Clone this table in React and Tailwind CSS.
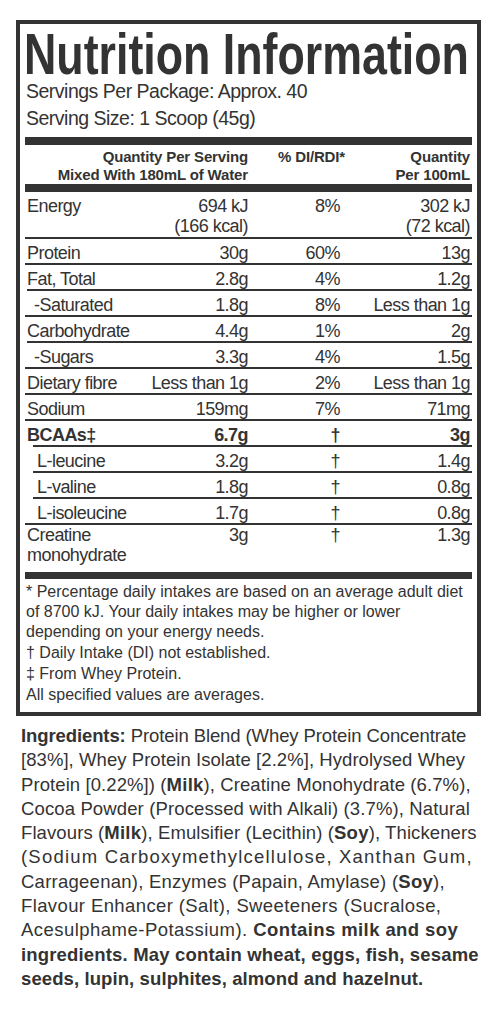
import React from 'react';

const rows = [
  { label: ['Energy'], qty: ['694 kJ', '(166 kcal)'], pct: '8%', per: ['302 kJ', '(72 kcal)'], first: true },
  { label: ['Protein'], qty: ['30g'], pct: '60%', per: ['13g'] },
  { label: ['Fat, Total'], qty: ['2.8g'], pct: '4%', per: ['1.2g'] },
  { label: ['-Saturated'], qty: ['1.8g'], pct: '8%', per: ['Less than 1g'], indent: 'sub' },
  { label: ['Carbohydrate'], qty: ['4.4g'], pct: '1%', per: ['2g'] },
  { label: ['-Sugars'], qty: ['3.3g'], pct: '4%', per: ['1.5g'], indent: 'sub' },
  { label: ['Dietary fibre'], qty: ['Less than 1g'], pct: '2%', per: ['Less than 1g'] },
  { label: ['Sodium'], qty: ['159mg'], pct: '7%', per: ['71mg'] },
  { label: ['BCAAs‡'], qty: ['6.7g'], pct: '†', per: ['3g'], bold: true },
  { label: ['L-leucine'], qty: ['3.2g'], pct: '†', per: ['1.4g'], indent: 'amino' },
  { label: ['L-valine'], qty: ['1.8g'], pct: '†', per: ['0.8g'], indent: 'amino' },
  { label: ['L-isoleucine'], qty: ['1.7g'], pct: '†', per: ['0.8g'], indent: 'amino' },
  { label: ['Creatine', 'monohydrate'], qty: ['3g'], pct: '†', per: ['1.3g'], last: true },
];

function Lines({ items }) {
  return items.map((t) => <div key={t} className="whitespace-nowrap">{t}</div>);
}

function Row({ label, qty, pct, per, indent, bold, first, last }) {
  const lineIndent = indent === 'amino' ? 'ml-[8px]' : indent === 'sub' ? 'ml-[2px]' : '';
  const labelPad = indent === 'amino' ? 'pl-[12px]' : indent === 'sub' ? 'pl-[9px]' : 'pl-[2px]';
  const pad = first ? 'pt-[4px] pb-[1px]' : last ? 'pt-0 pb-[7px]' : 'pt-[4px]';
  return (
    <div>
      {!first && <div className={`h-[2px] bg-[#333] ${lineIndent}`} />}
      <div
        className={`grid grid-cols-[123px_100px_92px_1fr] pr-[2px] text-[18px] leading-[20px] tracking-[-0.03em] ${pad} ${
          bold ? 'font-bold' : ''
        }`}
      >
        <div className={labelPad}>
          <Lines items={label} />
        </div>
        <div className="text-right">
          <Lines items={qty} />
        </div>
        <div className="text-right">{pct}</div>
        <div className="text-right">
          <Lines items={per} />
        </div>
      </div>
    </div>
  );
}

function B({ children, className = 'tracking-[0.25px]' }) {
  return <span className={`font-bold ${className}`}>{children}</span>;
}

export default function App() {
  return (
    <div className="min-h-screen bg-white pl-[16px] pt-[20px] text-[#333] font-['Liberation_Sans',Arial,sans-serif] overflow-hidden">
      <div className="w-[465px] border-4 border-[#333] px-[5px] pb-[7px]">
        <div className="pt-[6px] h-[54px] text-[57px] leading-[48px] font-bold whitespace-nowrap origin-left scale-x-[0.785] -ml-[1px]">
          Nutrition Information
        </div>
        <div className="text-[19.5px] leading-[27px] tracking-[-0.5px] pl-[1px]">
          <div>Servings Per Package: Approx. 40</div>
          <div>Serving Size: 1 Scoop (45g)</div>
        </div>

        <div className="mt-[5px] h-[8px] bg-[#333]" />
        <div className="grid grid-cols-[123px_100px_92px_1fr] pr-[2px] pt-[3px] text-[15px] leading-[18px] font-bold tracking-[-0.01em]">
          <div className="col-span-2 text-right whitespace-nowrap">
            <div>Quantity Per Serving</div>
            <div>Mixed With 180mL of Water</div>
          </div>
          <div className="text-right -mr-[5px] whitespace-nowrap">% DI/RDI*</div>
          <div className="text-right whitespace-nowrap">
            <div>Quantity</div>
            <div>Per 100mL</div>
          </div>
        </div>
        <div className="h-[8px] bg-[#333]" />

        {rows.map((r) => (
          <Row key={r.label.join(' ')} {...r} />
        ))}

        <div className="h-[7px] bg-[#333]" />
        <div className="pt-[3px] pl-[1px] text-[16px] leading-[20px] whitespace-nowrap">
          <div>* Percentage daily intakes are based on an average adult diet</div>
          <div>of 8700 kJ. Your daily intakes may be higher or lower</div>
          <div>depending on your energy needs.</div>
          <div className="mt-[1px]">† Daily Intake (DI) not established.</div>
          <div className="mt-[1px]">‡ From Whey Protein.</div>
          <div className="mt-[1px]">All specified values are averages.</div>
        </div>
      </div>

      <div className="mt-[8px] pl-[5px] text-[18.5px] leading-[24.3px] whitespace-nowrap">
        <div className="tracking-[-0.1px]">
          <span className="font-bold">Ingredients:</span> Protein Blend (Whey Protein Concentrate
        </div>
        <div className="tracking-[0.06px]">[83%], Whey Protein Isolate [2.2%], Hydrolysed Whey</div>
        <div className="tracking-[0.09px]">
          Protein [0.22%]) (<B>Milk</B>), Creatine Monohydrate (6.7%),
        </div>
        <div className="tracking-[0.13px]">Cocoa Powder (Processed with Alkali) (3.7%), Natural</div>
        <div className="tracking-[0.1px]">
          Flavours (<B>Milk</B>), Emulsifier (Lecithin) (<B>Soy</B>), Thickeners
        </div>
        <div className="tracking-[1.2px]">(Sodium Carboxymethylcellulose, Xanthan Gum,</div>
        <div className="tracking-[0.25px]">
          Carrageenan), Enzymes (Papain, Amylase) (<B>Soy</B>),
        </div>
        <div className="tracking-[0.39px]">Flavour Enhancer (Salt), Sweeteners (Sucralose,</div>
        <div className="tracking-[0.47px]">
          Acesulphame-Potassium). <B className="tracking-[0.4px]">Contains milk and soy</B>
        </div>
        <div>
          <B className="tracking-[0.17px]">ingredients. May contain wheat, eggs, fish, sesame</B>
        </div>
        <div>
          <B className="tracking-[0.1px]">seeds, lupin, sulphites, almond and hazelnut.</B>
        </div>
      </div>
    </div>
  );
}
